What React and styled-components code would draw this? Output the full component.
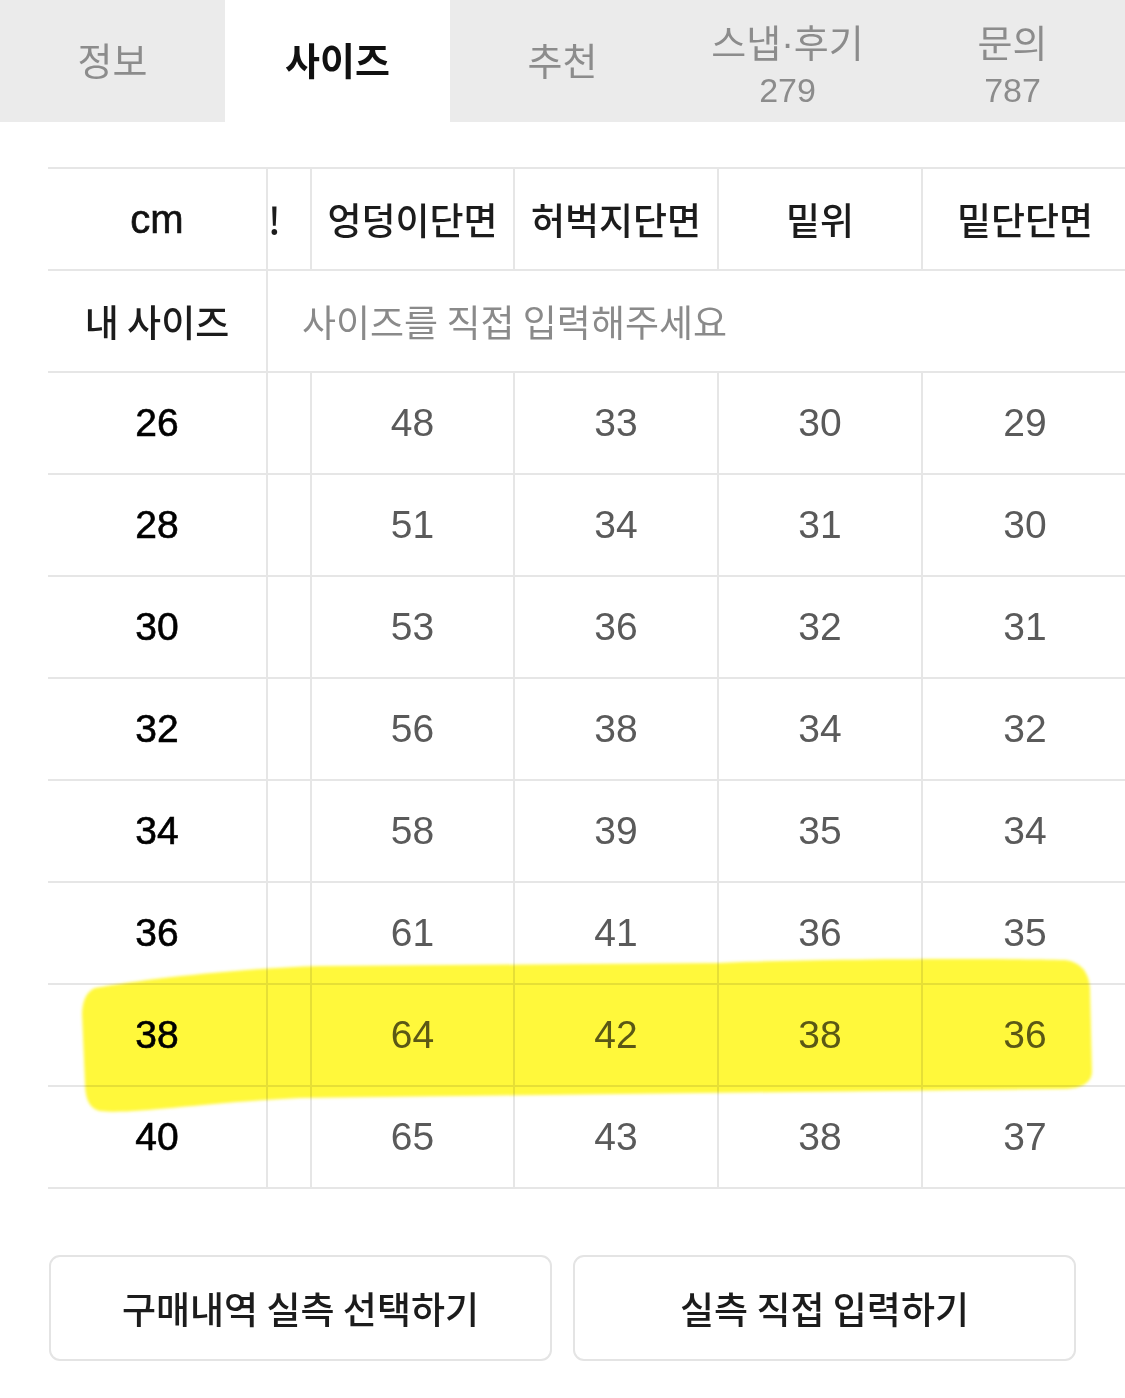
import React from "react";
import styled, { createGlobalStyle } from "styled-components";

const GlobalStyle = createGlobalStyle`
  body {
    margin: 0;
    background: #fff;
    font-family: "Liberation Sans", "Noto Sans CJK KR", sans-serif;
  }
`;

const tabs = [
  { id: 1, title: "정보" },
  { id: 2, title: "사이즈", active: true },
  { id: 3, title: "추천" },
  { id: 4, title: "스냅·후기", count: "279" },
  { id: 5, title: "문의", count: "787" },
];

const columns = ["엉덩이단면", "허벅지단면", "밑위", "밑단단면"];

const sizes = [
  { size: "26", values: ["48", "33", "30", "29"] },
  { size: "28", values: ["51", "34", "31", "30"] },
  { size: "30", values: ["53", "36", "32", "31"] },
  { size: "32", values: ["56", "38", "34", "32"] },
  { size: "34", values: ["58", "39", "35", "34"] },
  { size: "36", values: ["61", "41", "36", "35"] },
  { size: "38", values: ["64", "42", "38", "36"] },
  { size: "40", values: ["65", "43", "38", "37"] },
];

const LINE = "#e6e6e6";

const Page = styled.div`
  width: 1125px;
  min-height: 1398px;
  background: #fff;
`;

const TabBar = styled.div`
  display: grid;
  grid-template-columns: repeat(5, 1fr);
  height: 122px;
  background: #ebebeb;
`;

const Tab = styled.div`
  display: flex;
  flex-direction: column;
  align-items: center;
  justify-content: center;
  box-sizing: border-box;
  padding-top: ${({ $hasCount }) => ($hasCount ? 12 : 4)}px;
  background: ${({ $active }) => ($active ? "#fff" : "transparent")};
  color: ${({ $active }) => ($active ? "#111" : "#8c8c8c")};
`;

const TabTitle = styled.div`
  font-family: "Liberation Sans", "Noto Sans CJK KR", sans-serif;
  font-size: 38px;
  font-weight: ${({ $active }) => ($active ? 700 : 400)};
  line-height: 1.1;
`;

const TabCount = styled.div`
  font-size: 34px;
  line-height: 1.1;
  margin-top: 6px;
`;

const TableWrap = styled.div`
  position: relative;
  margin: 45px 0 0 48px;
  border-top: 2px solid ${LINE};
  overflow: hidden;
`;

const Row = styled.div`
  display: grid;
  grid-template-columns: ${({ $wide }) =>
    $wide ? "220px 1fr" : "220px 44px 203px 204px 204px 204px"};
  height: 102px;
  box-sizing: border-box;
  border-bottom: 2px solid ${LINE};
`;

const Cell = styled.div`
  display: flex;
  align-items: center;
  justify-content: ${({ $left }) => ($left ? "flex-start" : "center")};
  box-sizing: border-box;
  border-right: ${({ $last }) => ($last ? "none" : `2px solid ${LINE}`)};
  padding-left: ${({ $pad }) => $pad || 0}px;
  overflow: hidden;
  white-space: nowrap;
`;

const HeadText = styled.span`
  font-family: "Noto Sans CJK KR", sans-serif;
  font-size: 37px;
  font-weight: 500;
  color: #1c1c1c;
`;

const UnitText = styled.span`
  font-size: 40px;
  color: #111;
  -webkit-text-stroke: 0.6px #111;
`;

const SizeText = styled.span`
  font-size: 39px;
  color: #000;
  -webkit-text-stroke: 0.6px #000;
`;

const ValueText = styled.span`
  font-size: 39px;
  color: #5a5a5a;
`;

const Placeholder = styled.span`
  font-family: "Noto Sans CJK KR", sans-serif;
  font-size: 37px;
  color: #8a8a8a;
`;

const Marker = styled.svg`
  position: absolute;
  left: 0;
  top: 0;
  width: 1077px;
  height: 1022px;
  pointer-events: none;
  mix-blend-mode: multiply;
`;

const ButtonRow = styled.div`
  display: grid;
  grid-template-columns: 1fr 1fr;
  gap: 21px;
  margin: 66px 49px 0 49px;
`;

const Button = styled.button`
  height: 106px;
  background: #fff;
  border: 2px solid #e4e4e4;
  border-radius: 11px;
  font-family: "Noto Sans CJK KR", sans-serif;
  font-size: 37px;
  font-weight: 500;
  color: #1c1c1c;
  cursor: pointer;
`;

const App = () => {
  return (
    <Page>
      <GlobalStyle />
      <TabBar>
        {tabs.map((tab) => (
          <Tab key={tab.id} $active={tab.active} $hasCount={!!tab.count}>
            <TabTitle $active={tab.active}>{tab.title}</TabTitle>
            {tab.count && <TabCount>{tab.count}</TabCount>}
          </Tab>
        ))}
      </TabBar>

      <TableWrap>
        <Row>
          <Cell>
            <UnitText>cm</UnitText>
          </Cell>
          <Cell $left>
            <HeadText>!</HeadText>
          </Cell>
          {columns.map((col, i) => (
            <Cell key={col} $last={i === columns.length - 1}>
              <HeadText>{col}</HeadText>
            </Cell>
          ))}
        </Row>

        <Row $wide>
          <Cell>
            <HeadText>내 사이즈</HeadText>
          </Cell>
          <Cell $left $last $pad={34}>
            <Placeholder>사이즈를 직접 입력해주세요</Placeholder>
          </Cell>
        </Row>

        {sizes.map((row) => (
          <Row key={row.size}>
            <Cell>
              <SizeText>{row.size}</SizeText>
            </Cell>
            <Cell />
            {row.values.map((v, i) => (
              <Cell key={i} $last={i === row.values.length - 1}>
                <ValueText>{v}</ValueText>
              </Cell>
            ))}
          </Row>
        ))}

        <Marker viewBox="0 0 1077 1022">
          <defs>
            <filter id="soft" x="-5%" y="-20%" width="110%" height="140%">
              <feGaussianBlur stdDeviation="1.6" />
            </filter>
          </defs>
          <path
            filter="url(#soft)"
            fill="#fff83a"
            d="M47 819 C100 809 200 799 272 797 L672 794 C752 790 952 789 1017 791 Q1040 794 1042 819 L1044 904 Q1042 919 1017 920 L652 924 L252 929 C152 934 82 946 52 942 Q37 939 37 914 L34 844 Q35 824 47 819 Z"
          />
        </Marker>
      </TableWrap>

      <ButtonRow>
        <Button>구매내역 실측 선택하기</Button>
        <Button>실측 직접 입력하기</Button>
      </ButtonRow>
    </Page>
  );
};

export default App;
